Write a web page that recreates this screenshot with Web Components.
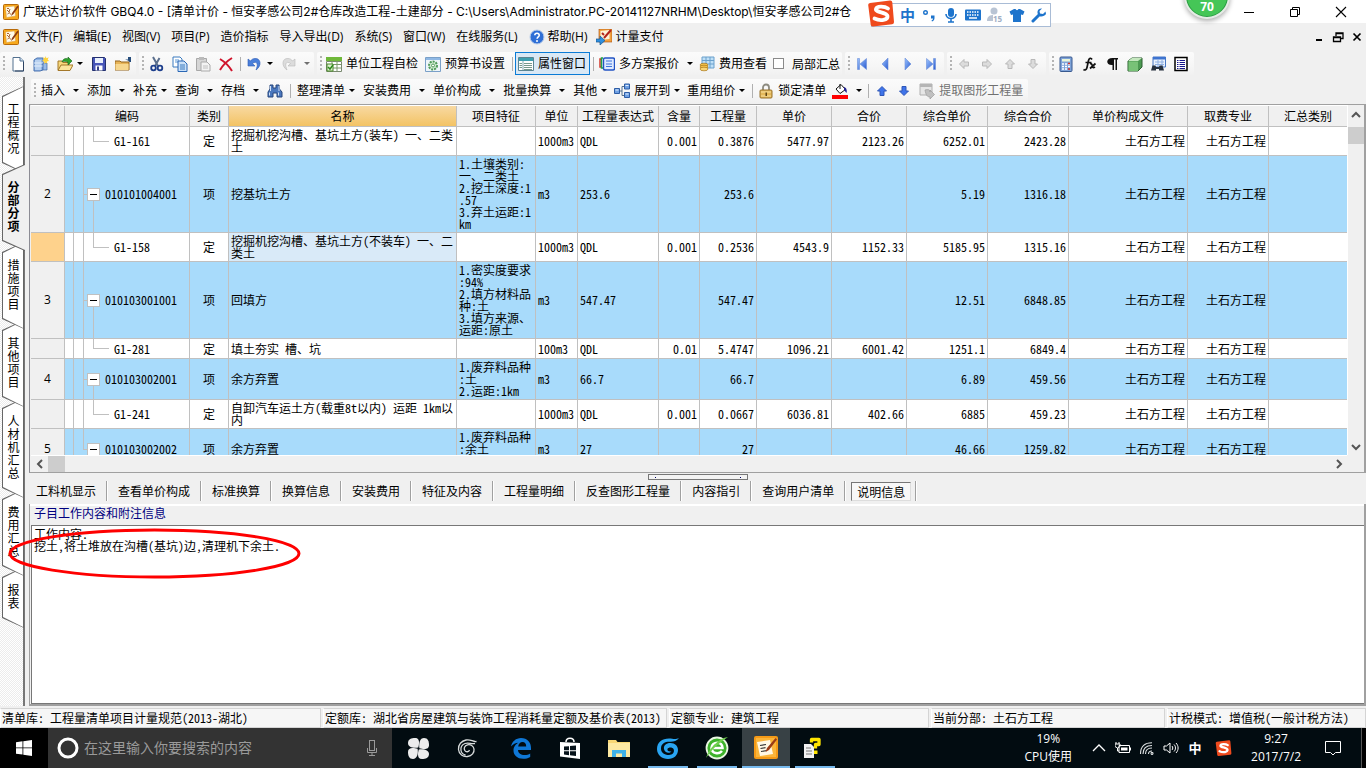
<!DOCTYPE html>
<html lang="zh-CN">
<head>
<meta charset="utf-8">
<title>广联达计价软件 GBQ4.0</title>
<style>
html,body{margin:0;height:100%}
body{
  --ui:"Open Sans","Noto Sans CJK SC",sans-serif;
  --song:"Noto Sans Mono CJK SC","Noto Sans CJK SC",monospace;
  --face:#f0f0f0;--line:#c0c0c0;--shade:#a0a0a0;
  font:12px/16px var(--ui);color:#000;background:var(--face);overflow:hidden;
}
</style>
</head>
<body>
<quota-app></quota-app>
<script>
const define=(name,css,html,init)=>customElements.define(name,class extends HTMLElement{
  constructor(){
    super();
    const t=document.createElement('template');
    t.innerHTML=`<style>*{box-sizing:border-box}button{font:inherit;color:inherit;background:none;border:0;padding:0;margin:0}a{color:inherit;text-decoration:none}${css}</style>${typeof html==='function'?html(this):html}`;
    this.attachShadow({mode:'open'}).appendChild(t.content.cloneNode(true));
    if(init)init(this);
  }
});

/* ---------- icons ---------- */
const chev=d=>`<path d="${d}" fill="none" stroke="#555" stroke-width="2"/>`;
const blueG='<defs><linearGradient id="b" x2="1" y2="1"><stop offset="0" stop-color="#9cc4ff"/><stop offset="1" stop-color="#2a5bd0"/></linearGradient></defs>';
const fatArrow=(rot,f,s)=>`<path transform="rotate(${rot} 8 8)" d="M8 3.500l4.500 4.500h-2.500v4.500H6V8H3.500z" fill="${f}" stroke="${s}"/>`;
const pen=`<rect x=".5" y=".5" width="15" height="15" rx="1" fill="#f7a81b" stroke="#b86a08"/><path d="M2.500 3l9-1 1 10-9 1.500z" fill="#fffbe9" stroke="#d8a04a" stroke-width=".5"/><path d="M4 6l2 2 1-3M4.500 10l2-1.500 1 2M4 4.500h2" stroke="#a0521c" stroke-width=".9" fill="none"/><path d="M14.500 1.500L9 9l-1 3 2.500-2 5-7z" fill="#8b3a12"/>`;
const sogou=`<path d="M3 3l20-2.500q2-.2 2.300 1.800L27 22q.2 2-1.800 2.300L6 26.500q-2 .2-2.300-1.800L1.200 5Q1 3.300 3 3z" fill="#ef4a1d"/><path d="M21 8.500c-3-2-11-3-12 .5s11 3 11.500 7-7 5.500-13 2.500" fill="none" stroke="#fff" stroke-width="3.800" stroke-linecap="round"/>`;
const ICONS={
 app:pen,
 newdoc:`<path d="M3 1.500h7l3.500 3.500v10H3z" fill="#fff" stroke="#52708f"/><path d="M10 1.500V5h3.500" fill="#cfe0f2" stroke="#52708f"/><path d="M13.500 6v9H5" stroke="#2d4260" fill="none"/>`,
 newproj:`<path d="M1 4l3-2h6v12l-3 1H1z" fill="#8fb4e4" stroke="#4a72b0"/><path d="M3 4v10M5 4v10M7 4v10M1 7h9M1 10h9" stroke="#e3eefb" fill="none"/><path d="M10 7h4v7h-4z" fill="#98bbe8" stroke="#3b64a4" stroke-width=".7"/><path d="M12.500 0l1 2.200 2.200-1-1 2.300L16 5l-2.200.6.5 2.200-1.800-1.300L11 8l.3-2.400L9 5l2-1.500-1-2.200 2 .6z" fill="#ffd43c"/>`,
 open:`<path d="M1 14V5h4l1 1.500h6V9" fill="#f7d87b" stroke="#a4782a"/><path d="M1 14.500L4 9h12l-3 5.500z" fill="#fbe59b" stroke="#a4782a"/><path d="M5 6c1-4 5-4 6-3V1l4 4-4 4V6.500C9 5 7 5 5 6z" fill="#2fa32d" stroke="#14661a" stroke-width=".6"/>`,
 save:`<path d="M1.500 1.500h12l1 1v12h-13z" fill="#4755b8" stroke="#23306f"/><path d="M4 2h8v5H4z" fill="#e9f0fb"/><path d="M4.500 9.500h7v5h-7z" fill="#fff"/><path d="M6 10.500h2v4H6z" fill="#333e86"/>`,
 folder:`<path d="M0 14V5h5l1 1h8v8z" fill="#e8b558" stroke="#94651c"/><path d="M.5 8h13v6H.5z" fill="#f7d78e"/><path d="M10 3.500h3V1h3v5h-1.500L13 4.500z" fill="#264d7c"/>`,
 cut:`<path d="M4 1l5 9M10.500 2L6 10" stroke="#5b6f8d" stroke-width="2" fill="none"/><circle cx="4.500" cy="12" r="2.300" fill="none" stroke="#1c3e8c" stroke-width="1.800"/><circle cx="11" cy="12" r="2.300" fill="none" stroke="#1c3e8c" stroke-width="1.800"/>`,
 copy:`<path d="M1 1h7l2 2v8H1z" fill="#fff" stroke="#3a7abf"/><path d="M3 4h4M3 6h3" stroke="#5b97d6"/><path d="M6 5h6l3 3v7.500H6z" fill="#cbe1f8" stroke="#2a67b5"/><path d="M8 9h5M8 11h5M8 13h5" stroke="#3a7abf"/>`,
 paste:`<path d="M1.500 2.500h10v12h-10z" fill="#d6d6d6" stroke="#a8a8a8"/><path d="M4 1h5v3H4z" fill="#bbb"/><path d="M6 6h6l3 3v6H6z" fill="#f3f3f3" stroke="#aaa"/><path d="M8 10h5M8 12h5" stroke="#c0c0c0"/>`,
 del:`<path d="M2 3c5 3 9 7 12 12M14 2C9 5 5 9 2 14" stroke="#d0142c" stroke-width="2" fill="none"/>`,
 undo:`<path d="M1 3v7h7L5.500 7.500c4-3 6 0 4 5l-.5 1.500c6-4 5-12-1-11.500C6 2.500 4.500 3.500 3.500 5z" fill="#4a7fda" stroke="#2a59b4" stroke-width=".6"/>`,
 redo:`<path transform="matrix(-1 0 0 1 16 0)" d="M1 3v7h7L5.500 7.500c4-3 6 0 4 5l-.5 1.500c6-4 5-12-1-11.500C6 2.500 4.500 3.500 3.500 5z" fill="#dcdcdc" stroke="#b8b8b8" stroke-width=".6"/>`,
 check:`<path d="M0 1h16v4H0z" fill="#6fb83a"/><path d="M.5 5.500h15v10H.500z" fill="#fff" stroke="#7a8a70"/><path d="M6 5v10M11 5v10M1 8.500h14M1 12h14" stroke="#7b9a6a"/><path d="M1 8h6v7H1z" fill="#dff0d0" stroke="#4a8a2a"/><path d="M2 11l2 2 3-4" fill="none" stroke="#2c8a1c" stroke-width="1.500"/>`,
 setting:`<path d="M.5 1.500h15v14H.500z" fill="#eef5fa" stroke="#7aa0c8"/><path d="M1 2h14v2H1z" fill="#8fb8e4"/><circle cx="8" cy="9.500" r="4" fill="#d4ecd4" stroke="#4f9a5a" stroke-width="2" stroke-dasharray="2 1"/><circle cx="8" cy="9.500" r="1.500" fill="#fff" stroke="#4f9a5a"/>`,
 prop:`<path d="M.5 1.500h15v13H.500z" fill="#fff" stroke="#5b8592"/><path d="M1 2h14v3H1z" fill="#3d9fb0"/><path d="M5 5v9" stroke="#86aab0"/><path d="M1.500 7.500H4M1.500 9.500H4M1.500 11.500H4M6 7.500h8M6 9.500h8M6 11.500h8M6 13.500h8" stroke="#78998c"/>`,
 multi:`<path d="M2 3H1v8h1" stroke="#d4382c" stroke-width="1.500" fill="none"/><path d="M4 2H2.500v10H4" stroke="#1fa34b" stroke-width="1.500" fill="none"/><rect x="4.500" y="2" width="11" height="12" rx="1.500" fill="#dfeaff" stroke="#2354c4" stroke-width="1.400"/><path d="M7 5h6M7 8h6M7 10.500h6" stroke="#3d74dd"/>`,
 fee:`<path d="M3 1h12v11H3z" fill="#bfe0f7" stroke="#6aa0cc"/><path d="M3 4.500h12M3 8h12M7 1v11M11 1v11" stroke="#6aa0cc"/><ellipse cx="5" cy="9" rx="4" ry="1.800" fill="#f6c44a" stroke="#a9771a" stroke-width=".7"/><ellipse cx="5" cy="11" rx="4" ry="1.800" fill="#f6c44a" stroke="#a9771a" stroke-width=".7"/><ellipse cx="5" cy="13" rx="4" ry="1.800" fill="#f9d677" stroke="#a9771a" stroke-width=".7"/>`,
 first:`${blueG}<path d="M3.500 2.500h2v11h-2zM12.500 2.500v11L6 8z" fill="url(#b)" stroke="#6b8fd8" stroke-width=".6"/>`,
 prev:`${blueG}<path d="M11 2v12L5 8z" fill="url(#b)" stroke="#6b8fd8" stroke-width=".6"/>`,
 next:`${blueG}<path d="M5 2v12l6-6z" fill="url(#b)" stroke="#6b8fd8" stroke-width=".6"/>`,
 last:`${blueG}<path d="M12.500 2.500h-2v11h2zM3.500 2.500v11L10 8z" fill="url(#b)" stroke="#6b8fd8" stroke-width=".6"/>`,
 gleft:fatArrow(-90,'#dcdcdc','#b8b8b8'),gright:fatArrow(90,'#dcdcdc','#b8b8b8'),gup:fatArrow(0,'#dcdcdc','#b8b8b8'),gdown:fatArrow(180,'#dcdcdc','#b8b8b8'),
 up:fatArrow(0,'#3f74ea','#2f57b8'),down:fatArrow(180,'#3f74ea','#2f57b8'),
 calc:`<rect x="2" y="1" width="12" height="14.500" rx="1" fill="#7fa3d8" stroke="#38598f"/><path d="M4 3h8v2.500H4z" fill="#e9f4d8"/><path d="M4 8h2M7 8h2M4 10.500h2M7 10.500h2M4 13h2M7 13h2M10 8h2M10 10.500h2" stroke="#fff" stroke-width="1.500"/><path d="M10 7.500h2M10 13h2" stroke="#d2312a" stroke-width="1.500"/>`,
 fx:`<path d="M11 3.500c-1-2-3-1.500-3.500 1L6 11.500c-.6 2.600-2 3-3.500 2M4.500 6.500h6M9 8c2-1 2 1 2.500 2.500s1 1.500 2.500.5M14.500 7.500L9 12.500" fill="none" stroke="#111" stroke-width="1.700"/>`,
 para:`<path d="M8.500 2H14v1.500h-1V14h-1.500V3.500H10V14H8.500V9C1.500 9.500 1.500 2 8.500 2z" fill="#111"/>`,
 cube:`<path d="M1 5l4-3h10v9l-4 4H1z" fill="#4c9a52" stroke="#2c5f31"/><path d="M1 5l4-3h10l-4 3z" fill="#c5e8bf"/><path d="M1.500 5.500H11V15H1.500z" fill="#78c277"/>`,
 find:`<path d="M3 1h12.500v10H3z" fill="#eaf2fd" stroke="#4777c4"/><path d="M3 1h12.500v2.500H3z" fill="#3e74d0"/><path d="M5 6h9M5 8.500h9M8 4v7M12 4v7" stroke="#8fb0e2"/><path d="M1 14.500l1.500-5h3L6 11h3l.5-1.500h3l1.500 5H9V13H6v1.500z" fill="#26313f"/>`,
 list:`<path d="M2 1.500h12v13H2z" fill="#fff" stroke="#000" stroke-width="1.500"/><path d="M4 4.500h1.500M4 6.500h1.500M4 8.500h1.500M4 10.500h1.500M4 12.500h1.500M6.500 4.500H12M6.500 6.500H12M6.500 8.500H12M6.500 10.500H12M6.500 12.500H12" stroke="#16168c"/>`,
 bino:`<path d="M3 2h3v3h3V2h3l.5 4L15 9v5h-5v-4H6v4H1V9l2-3z" fill="#4a77bd" stroke="#27477c"/><path d="M3.500 3v5M12 3v5M2.500 9.500v3M11.500 9.500v3" stroke="#cfe0f7"/>`,
 tree:`<path d="M5 8h3M8 3.500v9M8 3.500h2M8 12.500h2" stroke="#55708c" fill="none"/><path d="M.5 5.500h5v5h-5zM10.500 1h5v5h-5zM10.500 9.500h5v5h-5z" fill="#6ea0e4" stroke="#2d5da6"/><path d="M1.500 7h3M11.500 2.500h3M11.500 11h3" stroke="#e2eefc"/>`,
 lock:`<path d="M5 7V4.500a3 3 0 016 0V7" fill="none" stroke="#8d8b80" stroke-width="1.800"/><rect x="2" y="7" width="12" height="8" rx="1" fill="#e4b85a" stroke="#97702a"/><path d="M3 9h10M3 13h10" stroke="#f7df9f"/><path d="M7.500 9.500h1.500v3.500H7.500z" fill="#5e4210"/>`,
 fill:`<path d="M4 6l5-4.500 4.500 5L8 10.500z" fill="#fff" stroke="#111"/><path d="M8 1v5" stroke="#111"/><path d="M12 4c3 1 3 4 2.500 6L12 7z" fill="#20208c"/><path d="M0 12h16v4H0z" fill="#f00"/>`,
 extract:`<path d="M1 1h12v11H1z" fill="#e6e6e6" stroke="#b0b0b0"/><path d="M1 1h12v3H1z" fill="#b5b5b5"/><path d="M6 7c4-1 5 0 5 2V7l4.500 4.500L11 16v-2c-3 0-4-2-5-7z" fill="#c0c0c0" stroke="#9c9c9c" stroke-width=".7"/>`,
 help:`<circle cx="8" cy="8" r="7" fill="#2f6fd6" stroke="#b9cdea"/><path d="M5.800 6.200C6 3.500 10.500 3.800 10.200 6.500 10 8 8.200 8 8.100 9.800" fill="none" stroke="#fff" stroke-width="1.600"/><circle cx="8" cy="12" r="1" fill="#fff"/>`,
 pay:`<rect x="3" y="0" width="13" height="13" fill="#f2a03e" stroke="#a34b0c" stroke-width=".6"/><path d="M4.500 2l9-1v9l-9 1z" fill="#fff3d8"/><path d="M15 1L8 9M6 4l2 2" stroke="#b3251c" stroke-width="2"/><path d="M0 10h4V7l5 4.500L4 16v-3H0z" fill="#2e8fe0" stroke="#17568f" stroke-width=".7"/>`,
 min:`<path d="M3 8.500h10" stroke="#000"/>`,
 restore:`<path d="M3.500 5.500h7v7h-7zM5.500 5V3.500h7v7H11" fill="none" stroke="#000"/>`,
 close:`<path d="M3 3l10 10M13 3L3 13" stroke="#000" stroke-width="1.100"/>`,
 min2:`<path d="M5 11h6" stroke="#000" stroke-width="2"/>`,
 restore2:`<path d="M3.500 8h7v4.500h-7zM6 7V4h7v5.500h-2M3.500 8.500h7M6 4.500h7" fill="none" stroke="#000" stroke-width="1.300"/>`,
 close2:`<path d="M4.500 4.500l7 7M11.500 4.500l-7 7" stroke="#000" stroke-width="1.700"/>`,
 sup:chev('M4 10l4-4 4 4'),sdown:chev('M4 6l4 4 4-4'),sleft:chev('M10 4L6 8l4 4'),sright:chev('M6 4l4 4-4 4'),
 mic:`<rect x="5" y="1" width="6" height="9" rx="3" fill="#1e74cc"/><path d="M3 7c0 6 10 6 10 0M8 12v3M5 15h6" fill="none" stroke="#1e74cc" stroke-width="1.600"/>`,
 punct:`<circle cx="4.500" cy="5.500" r="1.800" fill="none" stroke="#1e74cc" stroke-width="1.400"/><path d="M10 8.500h3.500V11c0 2-1 3-2.500 3.500l-.5-1c1-.5 1.500-1 1.500-2H10z" fill="#1e74cc"/>`,
 keyb:`<rect x="0" y="2.500" width="16" height="11" rx="1" fill="#1e74cc"/><path d="M2 5h12M2 8h12" stroke="#fff" stroke-width="1.500" stroke-dasharray="1.500 1"/><path d="M4 11h8" stroke="#fff" stroke-width="1.500"/>`,
 user:`<circle cx="7" cy="4" r="3.500" fill="#b9c4d4"/><path d="M0 14c0-5 3-6 7-6s6 1 7 3v3z" fill="#b9c4d4"/>`,
 shirt:`<path d="M5 2h1.500c.5 1.500 2.500 1.500 3 0H11l4.500 2.500L14 8l-2-.5V15H4V7.500L2 8 .5 4.500z" fill="#1e74cc"/>`,
 wrench:`<path d="M2 14l6-6" stroke="#1e74cc" stroke-width="3" stroke-linecap="round"/><path d="M14.500 4.500L12 7 9 6.500 8.500 4 11 1.500C7.500 1 5.500 4 7 7.500s6.500 2 8-.5z" fill="#1e74cc"/>`,
 sogou:sogou,
 win:`<path d="M0 2.200l6.500-.9v6.200H0zM7.300 1.200L16 0v7.500H7.300zM0 8.300h6.500v6.300L0 13.700zM7.300 8.300H16V16l-8.700-1.300z" fill="#fff"/>`,
 ring:`<circle cx="11" cy="11" r="9" fill="none" stroke="#fff" stroke-width="3"/>`,
 tmic:`<rect x="5.500" y=".5" width="5" height="10" fill="none" stroke="#9a9a9a"/><path d="M3.500 8v4.500h9V8M8 12.500v3M5 15.500h6" fill="none" stroke="#9a9a9a"/>`,
 petals:`<g fill="#ececec"><path d="M11.200 10.600C6 11.500 1 10 1 6 1 2 4.500 1 8 1c3 0 4 2 4 4.500 0 2-.3 3.500-.8 5.100z"/><path d="M12.400 11.200C11.500 6 13 1 17 1c4 0 5 3.500 5 7 0 3-2 4-4.500 4-2 0-3.500-.3-5.100-.8z"/><path d="M11.800 12.400c5.200-.9 10.200.6 10.200 4.600s-3.500 5-7 5c-3 0-4-2-4-4.500 0-2 .3-3.500.8-5.100z"/><path d="M10.600 11.800c.9 5.200-.6 10.200-4.600 10.200s-5-3.500-5-7c0-3 2-4 4.500-4 2 0 3.500.3 5.100.8z"/></g>`,
 swirl:`<path d="M20.500 4.500c-4 .5-5.500-2.500-10.500-1.500C5.500 4 2 7.500 2.500 12.500c.5 5 4.500 7.500 9 7 4.500-.6 7-4 6.500-7.500-.5-3-3.500-5-6.500-4.200-3 .9-4 3.700-2.700 5.700 1.200 1.800 4 1.700 4.700-.5M19 6.500c-4 1-6-1.500-10 0-3 1.200-4.500 4-4 7 .4 2.500 2.200 4 4.500 4.500" fill="none" stroke="#d8dcdc" stroke-width="1.300"/>`,
 edge:`<path d="M1 9.500C2 4.500 6 1 11 1c6.500 0 10 4.500 10 10v2H8c.2 3.500 3 5 6.500 5 2.200 0 4.300-.6 5.700-1.600V20c-2 1.300-4.500 1.800-7 1.800C7 21.800 3.500 18 3.500 13.500c0-4 2.300-6.500 5-7.800C5.500 5.900 3 7 1 9.500zM8.200 9.500h8c0-3-1.300-4.500-3.700-4.500-2.200 0-3.900 1.700-4.300 4.500z" fill="#0f78d7"/>`,
 store:`<path d="M1 5l20 1v16L1 19.500z" fill="#fff"/><path d="M7 5c0-5 8-5 8 0" fill="none" stroke="#fff" stroke-width="1.500"/><path d="M5 9.500l5-.3v4H5zM11 9l6-.4v4.600h-6zM5 14.200h5v4l-5-.6zM11 14.200h6v4.800l-6-.7z" fill="#06121a"/>`,
 files:`<path d="M0 3h8l1.500 2H22v15H0z" fill="#f8d775"/><path d="M0 6h22v14H0z" fill="#fde9a2"/><path d="M4 20v-7h14v7h-4v-3.500H8V20z" fill="#3fb2e8"/>`,
 bigG:`<path d="M23 2c-4 2-6 .5-10 .5C6 2.500 1 6.500 1 13c0 6 5 10 11 10s10-4 10-9c0-4-3-7-7.500-7S7.500 9.500 8 13s5 5 7.500 2.500c-3 .5-4.500-1-4-2.500.7-2 5-2 6 0 1.500 3-1 6-4.500 6-5 0-8-2.500-8-6.500C5 7 10 5.500 14 5.800c3 .2 7-.8 9-3.800z" fill="#29a5f2"/>`,
 green:`<circle cx="12" cy="12" r="10.500" fill="#3db22b" stroke="#e9f7e2" stroke-width="1.800"/><path d="M6 12h11.500c0-7-10.500-7-11 0 .3 6 7.500 6.500 10.500 3" fill="none" stroke="#fff" stroke-width="2.600"/><path d="M1 22C4 12 14 2 23 1c-4 3-14 9-22 21z" fill="#6fd04e"/>`,
 penbig:`<rect x="0" y="0" width="24" height="23" rx="2" fill="#f59a17"/><path d="M2 2h20v19H2z" fill="#fbb53a"/><path d="M3 6l13-2 3 14-13 2z" fill="#fff8e4"/><path d="M6 9.500l6-1M6.500 12.500l5-.8M7 15.500l6-1" stroke="#333" stroke-width="1.200"/><path d="M21.500 2L13 12l-1.500 4L15 14l8-10.500z" fill="#9c3b15"/>`,
 qdoc:`<path d="M1 8h7l3 3v11H1z" fill="#f2f2f2"/><path d="M3 12h5M3 15h6M3 18h6" stroke="#777"/><path d="M8.500 6.500V3.500h7.500v5h-3.500v4" fill="none" stroke="#ffe500" stroke-width="3.300" stroke-linejoin="round"/><path d="M11 14.500h3.500V18H11z" fill="#ffe500"/>`,
 tup:`<path d="M2 11l6-6 6 6" fill="none" stroke="#fff" stroke-width="1.300"/>`,
 batt:`<path d="M4 5.500h10.500v7H4zM15.500 7.500v3" fill="none" stroke="#fff"/><path d="M6 7.500h6.500v3H6z" fill="#fff"/><path d="M0 4h5v2.500L2.500 8 0 6.500zM1 2v2M4 2v2M2.500 8v3H4" fill="none" stroke="#fff"/>`,
 wifi:`<path d="M12 13.500a1 1 0 100-.1M9.500 14c0-2 1-3 3.500-3M6.500 14c0-4 2-6 6.500-6M4 14C4 8 7 5.500 13 5.500M1.500 14C1.500 6 6 2.800 13 2.800" fill="none" stroke="#dfe3e4" stroke-width="1.100"/>`,
 vol:`<path d="M1 6h2.500L7 3v10l-3.500-3H1z" fill="none" stroke="#fff"/><path d="M9 6c1 1 1 3 0 4M11 4.500c2 2 2 5 0 7M13 3c2.800 3 2.800 7 0 10" fill="none" stroke="#fff"/>`,
 notif:`<path d="M.5 1.500h15v11h-5L8 15l-2.500-2.500h-5z" fill="none" stroke="#fff"/>`
};
const BOX={sogou:28,ring:22,petals:23,swirl:22,edge:22,store:22,files:22,bigG:24,green:24,penbig:24,qdoc:24};
customElements.define('app-icon',class extends HTMLElement{
  connectedCallback(){
    if(this.shadowRoot)return;
    const n=this.getAttribute('name'),s=+this.getAttribute('size')||BOX[n]||16,b=BOX[n]||16;
    this.attachShadow({mode:'open'}).innerHTML=`<style>:host{display:block;flex:none}svg{display:block}</style><svg width="${s}" height="${s}" viewBox="0 0 ${b} ${b}" aria-hidden="true">${ICONS[n]}</svg>`;
  }
});

/* ---------- title and menu ---------- */
define('title-bar',`
:host{display:flex;align-items:center;height:23px;background:#fff;padding:0 2px 0 3px}
.t{flex:1;min-width:0;margin-left:4px;white-space:nowrap;overflow:hidden;font-family:Inter,"Noto Sans CJK SC",sans-serif}
button{width:46px;height:23px;display:grid;place-items:center}`,
`<app-icon name="app"></app-icon><span class="t">广联达计价软件 GBQ4.0 - [清单计价 - 恒安孝感公司2#仓库改造工程-土建部分 - C:\\Users\\Administrator.PC-20141127NRHM\\Desktop\\恒安孝感公司2#仓</span>
<button aria-label="最小化"><app-icon name="min"></app-icon></button><button aria-label="还原"><app-icon name="restore"></app-icon></button><button aria-label="关闭"><app-icon name="close"></app-icon></button>`);

define('menu-bar',`
:host{display:flex;align-items:center;height:27px;padding-left:3px}
nav{display:flex;flex:1;gap:11px;margin-left:6px;white-space:nowrap}
a{display:flex;align-items:center;gap:3px}
a:last-child{margin-left:-3px;gap:4px}
button{width:19px;height:20px;display:grid;place-items:center}`,
`<app-icon name="app"></app-icon><nav>${['文件(F)','编辑(E)','视图(V)','项目(P)','造价指标','导入导出(D)','系统(S)','窗口(W)','在线服务(L)'].map(x=>`<a href="#">${x}</a>`).join('')}<a href="#"><app-icon name="help"></app-icon>帮助(H)</a><a href="#"><app-icon name="pay"></app-icon>计量支付</a></nav>
<button aria-label="最小化窗口"><app-icon name="min2"></app-icon></button><button aria-label="还原窗口"><app-icon name="restore2"></app-icon></button><button aria-label="关闭窗口"><app-icon name="close2"></app-icon></button>`);

/* ---------- tool bars ---------- */
define('tool-strip',`
:host{display:flex;align-items:center;height:24px;padding-right:1px;border-radius:2px;background:linear-gradient(#fbfbfb,#f6f6f6 60%,#f0f0f0);margin-right:3px}
i{width:2px;height:15px;margin:0 1px 0 3px;background:repeating-linear-gradient(#b4b4b4 0 2px,transparent 2px 4px)}`,
`<i></i><slot></slot>`);
define('tool-button',`
:host{display:block;flex:none}
button{display:flex;align-items:center;height:24px;padding:0 4px;white-space:nowrap}
:host([on]) button{padding:0 3px 0 2px;height:23px;border:1px solid #0a7bd6;background:#d9e8f5}
:host([off]) button{color:#707070}
.l{margin-left:4px}
.l.only{margin-left:0}
.d{border:3px solid transparent;border-top-color:#000;border-bottom:0;margin-left:8px}
:host([tight]) .d{margin-left:4px}
:host([off]) .d{border-top-color:#707070}
:host([slim]) button{padding:0 3px}
:host([mid]) button{padding:0 4px 0 3px}`,
el=>{const i=el.getAttribute('icon'),t=el.getAttribute('label'),d=el.hasAttribute('drop');
 return `<button ${t?'':`aria-label="${i}"`}>${i?`<app-icon name="${i}"></app-icon>`:''}${t?`<span class="l${i?'':' only'}">${t}</span>`:''}${d?'<span class="d"></span>':''}</button>`});
define('tool-sep',`:host{display:block;width:1px;height:14px;background:#b0b0b0;margin:0 2px 0 3px}`,'');
const B=(icon,label='',flags='')=>`<tool-button ${icon?`icon="${icon}"`:''} ${label?`label="${label}"`:''} ${flags}></tool-button>`;
define('tool-bars',`
:host{display:block}
.row{display:flex;align-items:center;height:27px;overflow:hidden}
label{display:flex;align-items:center;gap:8px;padding:0 1px 0 3px;font-family:var(--song);white-space:nowrap}
input{appearance:none;width:11px;height:11px;margin:0;border:1px solid #8a8a8a;background:#fff}`,
`<div class="row"><tool-strip>${B('newdoc')+B('newproj','','mid')+B('open','','drop tight')+B('save')+B('folder')}</tool-strip>
<tool-strip>${B('cut')+B('copy','','slim')+B('paste')+B('del','','slim')}<tool-sep></tool-sep>${B('undo','','drop tight')+B('redo','','drop off slim')}</tool-strip>
<tool-strip>${B('check','单位工程自检','mid')+B('setting','预算书设置','mid')}<tool-sep></tool-sep>${B('prop','属性窗口','on')}<tool-sep></tool-sep>${B('multi','多方案报价','drop slim')+B('fee','费用查看','slim')}<label><input type="checkbox">局部汇总</label></tool-strip>
<tool-strip>${['first','prev','next','last'].map(n=>B(n,'','mid')).join('')}</tool-strip>
<tool-strip>${['gleft','gright','gup','gdown'].map(n=>B(n,'','mid off')).join('')}</tool-strip>
<tool-strip>${['calc','fx','para','cube','find','list'].map(n=>B(n,'','mid')).join('')}</tool-strip></div>`);
define('edit-bar',`
:host{display:flex;align-items:center;height:27px;overflow:hidden;padding-left:2px}`,
`<tool-strip>${B('','插入','drop')+B('','添加','drop')+B('','补充','drop tight')+B('','查询','drop')+B('','存档','drop')+B('bino')}<tool-sep></tool-sep>${B('','整理清单','drop tight')+B('','安装费用','drop')+B('','单价构成','drop')+B('','批量换算','drop')+B('','其他','drop tight')+B('tree','展开到','drop tight slim')+B('','重用组价','drop tight')}<tool-sep></tool-sep>${B('lock','锁定清单','slim')+B('fill','','drop slim')}<tool-sep></tool-sep>${B('up','','slim')+B('down','','slim')+B('extract','提取图形工程量','off')}</tool-strip>`);

/* ---------- side tabs ---------- */
define('side-tabs',`
:host{display:block;width:25px;flex:none;position:relative;z-index:0;padding:9px 0 0 2px;
 background:linear-gradient(#777,#777) right/2px 100% no-repeat,repeating-conic-gradient(#fff 0 25%,#ececec 0 50%) 0 0/2px 2px}
button{position:relative;display:block;width:22px;margin-bottom:-9px;padding:16px 4px 19px 5px;font:12px/13px var(--song);word-break:break-all;
 background:#666;clip-path:polygon(100% 0,0 10px,0 calc(100% - 10px),100% 100%)}
button::before{content:"";position:absolute;inset:1px 1px 1px 1px;background:#fff;clip-path:polygon(100% 0,0 10px,0 calc(100% - 10px),100% 100%)}
button span{position:relative;display:block;width:13px}
button.on{font-weight:bold;width:23px}
button.on::before{background:var(--face);right:0}`,
['工程概况','分部分项','措施项目','其他项目','人材机汇总','费用汇总','报表'].map((t,i)=>`<button class="${i===1?'on':''}" style="z-index:${i===1?9:7-i}"><span>${t}</span></button>`).join(''));

/* ---------- grid ---------- */
const COLS=[['',34],['编码',125],['类别',39],['名称',228],['项目特征',79],['单位',42],['工程量表达式',81],['含量',41],['工程量',57],['单价',75],['合价',75],['综合单价',81],['综合合价',81],['单价构成文件',119],['取费专业',81],['汇总类别',0]];
const T='土石方工程';
const ROWS=[
 ['','G1-161','定','挖掘机挖沟槽、基坑土方(装车) 一、二类<br>土','','1000m3','QDL','0.001','0.3876','5477.97','2123.26','6252.01','2423.28'],
 ['2','010101004001','项','挖基坑土方','1.土壤类别:<br>一、二类土<br>2.挖土深度:1<br>.57<br>3.弃土运距:1<br>km','m3','253.6','','253.6','','','5.19','1316.18'],
 ['*','G1-158','定','挖掘机挖沟槽、基坑土方(不装车) 一、二<br>类土','','1000m3','QDL','0.001','0.2536','4543.9','1152.33','5185.95','1315.16'],
 ['3','010103001001','项','回填方','1.密实度要求<br>:94%<br>2.填方材料品<br>种:土<br>3.填方来源、<br>运距:原土','m3','547.47','','547.47','','','12.51','6848.85'],
 ['','G1-281','定','填土夯实 槽、坑','','100m3','QDL','0.01','5.4747','1096.21','6001.42','1251.1','6849.4'],
 ['4','010103002001','项','余方弃置','1.废弃料品种<br>:土<br>2.运距:1km','m3','66.7','','66.7','','','6.89','459.56'],
 ['','G1-241','定','自卸汽车运土方(载重8t以内) 运距 1km以<br>内','','1000m3','QDL','0.001','0.0667','6036.81','402.66','6885','459.23'],
 ['5','010103002002','项','余方弃置','1.废弃料品种<br>:余土<br>&nbsp;','m3','27','','27','','','46.66','1259.82']];
define('bill-grid',`
:host{display:grid;grid-template-columns:minmax(0,1fr) 17px;grid-template-rows:350px 17px;border:1px solid var(--shade);border-left-color:#8c8c94;padding:0 0 0 1px;overflow:hidden;border-right-width:2px}
.view{overflow:hidden;padding-top:1px;background:#fff}
table{border-spacing:0;table-layout:fixed;width:100%;font:12px/12px var(--song);white-space:nowrap}
th,td{border:solid var(--line);border-width:0 1px 1px 0;padding:2px;height:20px;text-align:left;overflow:hidden}
th:last-child,td:last-child{border-right:0}
thead th{height:21px;text-align:center;font-weight:normal;background:var(--face);padding:0}
thead th.sel{background:linear-gradient(#f8d9a2,#f3c364)}
tbody th{background:var(--face);text-align:center;font:12px/12px var(--ui)}
tbody th.sel{background:#fed28c}
tr.item td{background-color:#a8dbfb}
td.sel{background:#d9eaf8}
.c{text-align:center}.r{text-align:right}
td.code{--g:linear-gradient(var(--line),var(--line));
 background-image:var(--g),var(--g),var(--g),var(--g);background-repeat:no-repeat;
 background-position:8px 0,18px 0,28px 0,28px 50%;background-size:1px 100%,1px 100%,1px 50%,16px 1px;padding-left:49px}
.item td.code{background-position:8px 0,18px 0,28px 100%,18px 50%;background-size:1px 100%,1px 100%,1px 50%,4px 1px;padding-left:22px}
.item:last-child td.code{background-size:1px 100%,1px 50%,1px 50%,4px 1px}
.n{display:flex;align-items:center;gap:5px}
.n button{width:13px;height:13px;flex:none;border:1px solid var(--line);background:linear-gradient(#000,#000) center/7px 1px no-repeat #fff}
.v,.h{background:var(--face);display:flex;align-items:center;border:0 solid #fff}
.v{flex-direction:column;border-left-width:1px;padding:2px 0 0}
.h{border-top-width:1px;padding-left:1px}
.v b{width:16px;height:17px;background:#cdcdcd;margin-top:4px}
.h b{width:17px;height:16px;background:#cdcdcd}
.v app-icon:last-child{margin-top:auto}.h app-icon:last-child{margin-left:auto}
.corner{background:var(--face)}`,
()=>`<div class="view"><table><colgroup>${COLS.map(c=>`<col${c[1]?` style="width:${c[1]}px"`:''}>`).join('')}</colgroup><thead><tr>${COLS.map(c=>`<th scope="col" class="${c[0]==='名称'?'sel':''}">${c[0]}</th>`).join('')}</tr></thead><tbody>${ROWS.map(r=>{
 const item=r[2]==='项',cur=r[0]==='*',cells=[...r.slice(1),T,T,''];
 return `<tr class="${item?'item':''}"><th scope="row" class="${cur?'sel':''}">${cur?'':r[0]}</th>${cells.map((v,i)=>{
  if(i===0)return `<td class="code">${item?`<div class="n"><button aria-label="折叠"></button>${v}</div>`:v}</td>`;
  return `<td class="${i===1?'c':i>=6?'r':''}${cur&&i===2?' sel':''}">${v}</td>`}).join('')}</tr>`}).join('')}</tbody></table></div>
<div class="v"><app-icon name="sup"></app-icon><b></b><app-icon name="sdown"></app-icon></div>
<div class="h"><app-icon name="sleft"></app-icon><b></b><app-icon name="sright"></app-icon></div><div class="corner"></div>`);

/* ---------- detail pane ---------- */
define('detail-pane',`
:host{display:flex;flex-direction:column;flex:1;min-height:0;font-family:var(--song)}
.split{height:8px;display:grid;place-items:center}
.split i{display:flex;justify-content:space-between;align-items:center;padding:0 6px;width:100px;height:6px;border:1px solid #777;background:#f4f4f4}
.split i::before,.split i::after{content:"";width:1px;height:1px;background:#006}
nav{display:flex;height:23px}
nav button{height:20px;padding:0 10px;border-right:1px solid var(--shade);box-shadow:1px 0 #fff;margin-right:1px;white-space:nowrap}
nav button:first-child{padding-left:7px}
nav button.on{padding:0 4px 0 5px}
nav button.on span{display:block;padding:1px 5px 0;height:19px;border:1px solid #fff;border-color:#777 #ddd #ddd #777;background:#f8f8f8}
section{flex:1;min-height:0;display:flex;flex-direction:column;border:1px solid #a0a0a0;border-width:0 2px 2px 1px;box-shadow:inset 0 2px #fff}
h2{margin:0;font:12px/18px var(--song);color:#000080;padding:0 4px 3px}
textarea{flex:1;margin:0 0 0 1px;border:1px solid #777;border-width:1px 0 1px 1px;outline:0;resize:none;padding:2px;font:12px/12px var(--song);background:#fff;color:#000;overflow:hidden}`,
`<div class="split"><i></i></div><nav>${['工料机显示','查看单价构成','标准换算','换算信息','安装费用','特征及内容','工程量明细','反查图形工程量','内容指引','查询用户清单'].map(t=>`<button>${t}</button>`).join('')}<button class="on"><span>说明信息</span></button></nav>
<section><h2><label for="note">子目工作内容和附注信息</label></h2><textarea id="note" readonly>工作内容:
挖土,将土堆放在沟槽(基坑)边,清理机下余土.</textarea></section>`);

/* ---------- status and task bars ---------- */
define('status-bar',`
:host{display:grid;grid-template-columns:321px 344px 260px 234px minmax(0,1fr);gap:2px;height:20px;margin-top:2px;font:12px/18px var(--song);white-space:nowrap}
span{padding:0 1px;border:1px solid #d4d4d4;border-left-color:#fff;background:#f6f6f6;overflow:hidden}`,
['清单库: 工程量清单项目计量规范(2013-湖北)','定额库: 湖北省房屋建筑与装饰工程消耗量定额及基价表(2013)','定额专业: 建筑工程','当前分部: 土石方工程','计税模式: 增值税(一般计税方法)'].map(t=>`<span>${t}</span>`).join(''));
define('task-bar',`
:host{display:flex;height:40px;background:#020c11;color:#fff}
button{display:grid;place-items:center;height:40px}
.start{width:48px;background:#000}
.find{display:flex;align-items:center;width:344px;background:#333;padding:0 12px 0 9px}
.find input{flex:1;min-width:0;border:0;outline:0;background:none;font:14px/20px var(--ui);color:#fff;padding:0 0 0 5px}
.find input::placeholder{color:#9a9a9a;opacity:1}
.apps{display:flex;gap:1px;padding-left:2px;flex:1}
.apps button{width:48px}
.apps button:nth-child(2){margin-right:5px}
.run{background:linear-gradient(#76b9ed,#76b9ed) center bottom/40px 2px no-repeat}
.cur{background:linear-gradient(#76b9ed,#76b9ed) center bottom/48px 2px no-repeat #384145}
.two{font:12px/18px var(--ui);text-align:center;padding-top:2px;white-space:nowrap}
.tray{display:flex;align-items:center;gap:8px;padding:0 19px}
.ime{font-size:13px;font-weight:bold;width:16px;text-align:center}
.tray .sg{margin-left:4px}
.note{width:56px;margin-left:4px}
.edge{width:5px;border-left:1px solid #555;background:#000}`,
`<button class="start" aria-label="开始"><app-icon name="win"></app-icon></button>
<div class="find"><app-icon name="ring"></app-icon><input type="text" placeholder="在这里输入你要搜索的内容" aria-label="搜索"><app-icon name="tmic"></app-icon></div>
<div class="apps">${[['petals'],['swirl'],['edge'],['store'],['files'],['bigG','run'],['green','run'],['penbig','cur'],['qdoc','run']].map(([n,c=''])=>`<button class="${c}" aria-label="${n}"><app-icon name="${n}"></app-icon></button>`).join('')}</div>
<div class="two">19%<br>CPU使用</div>
<div class="tray"><app-icon name="tup"></app-icon><app-icon name="batt"></app-icon><app-icon name="wifi"></app-icon><app-icon name="vol"></app-icon><span class="ime">中</span><app-icon class="sg" name="sogou" size="17"></app-icon></div>
<div class="two">9:27<br>2017/7/2</div>
<button class="note" aria-label="通知"><app-icon name="notif"></app-icon></button><div class="edge"></div>`);

/* ---------- floating widgets ---------- */
define('ime-bar',`
:host{position:absolute;z-index:5;top:3px;right:315px;display:flex;align-items:center;gap:6px;width:180px;height:24px;padding:0 4px 0 28px;border:1px solid #a9bcd6;background:#fff;color:#1e74cc}
.logo{position:absolute;left:-5px;top:-4px}
b{font:bold 15px/20px var(--ui);width:15px}
.u{position:relative}
.u small{position:absolute;left:6px;top:8px;font:bold 8px/8px var(--ui);color:#9fb0c6;background:#fff}`,
`<app-icon class="logo" name="sogou"></app-icon><b>中</b><app-icon name="punct"></app-icon><app-icon name="mic"></app-icon><app-icon name="keyb"></app-icon><span class="u"><app-icon name="user"></app-icon><small>15</small></span><app-icon name="shirt"></app-icon><app-icon name="wrench"></app-icon>`);
define('speed-ball',`
:host{position:absolute;z-index:5;top:-27px;right:136px;width:46px;height:46px;border-radius:50%;border:2px solid #e6ebe6;background:#45c657;box-shadow:0 2px 5px #0005,inset 0 0 0 1px #2c9a45;color:#fff;font:bold 12px/16px var(--ui);text-align:center;padding-top:24px;box-sizing:border-box}`,'70');
define('red-mark',`:host{position:absolute;z-index:5;left:8px;top:528px;pointer-events:none}svg{display:block}`,
`<svg width="293" height="51" viewBox="0 0 293 51" aria-hidden="true"><ellipse cx="146.500" cy="25.500" rx="144.500" ry="23.500" fill="none" stroke="#fe0000" stroke-width="3"/></svg>`);

define('quota-app',`
:host{display:flex;flex-direction:column;height:100vh;min-height:640px;position:relative;overflow:hidden}
.body{flex:1;min-height:0;display:flex}
main{flex:1;min-width:0;display:flex;flex-direction:column;padding-left:4px}`,
`<title-bar></title-bar><menu-bar></menu-bar><tool-bars></tool-bars>
<div class="body"><side-tabs></side-tabs><main><edit-bar></edit-bar><bill-grid></bill-grid><detail-pane></detail-pane></main></div>
<status-bar></status-bar><task-bar></task-bar><ime-bar></ime-bar><speed-ball></speed-ball><red-mark></red-mark>`);
</script>
</body>
</html>
